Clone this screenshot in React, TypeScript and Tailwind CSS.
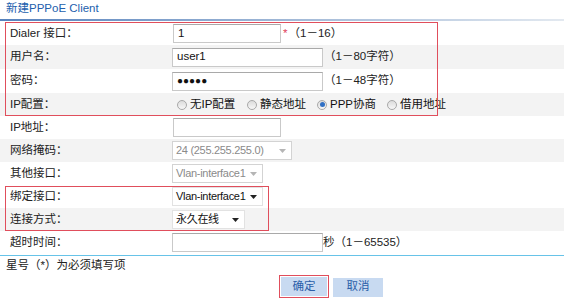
import React from "react";

const font = "font-['Liberation_Sans','Noto_Sans_CJK_SC',sans-serif]";

function Row({ label, gray, h = "h-[23px]", children }: { label: string; gray?: boolean; h?: string; children?: React.ReactNode }) {
  return (
    <div className={`flex items-center ${h} ${gray ? "bg-[#f3f3f3]" : "bg-white"}`}>
      <div className="w-[172px] shrink-0 pl-[10px] text-[#222] whitespace-nowrap">{label}</div>
      <div className="flex items-center whitespace-nowrap">{children}</div>
    </div>
  );
}

function TextBox({ w, value, dots }: { w: string; value?: string; dots?: boolean }) {
  return (
    <div className={`${w} h-[19px] border border-[#c9c9c9] border-t-[#a9a9a9] bg-white pl-[4px] flex items-center text-[#111]`}>
      {dots ? <span className="text-[10px] font-bold">●●●●●</span> : value}
    </div>
  );
}

function Select({ w, value, disabled }: { w: string; value: string; disabled?: boolean }) {
  return (
    <div className={`${w} h-[19px] border ${disabled ? "border-[#d3d3d3]" : "border-[#e2e2e2]"} bg-white pl-[3px] pr-[5px] flex items-center justify-between`}>
      <span className={`whitespace-nowrap text-[11px] tracking-[-0.3px] ${disabled ? "text-[#8a8a8a]" : "text-[#111]"}`}>{value}</span>
      <svg width="7" height="4" viewBox="0 0 7 4" className="shrink-0">
        <path d="M0 0h7L3.5 4z" fill={disabled ? "#b5b5b5" : "#222"} />
      </svg>
    </div>
  );
}

function Radio({ label, checked }: { label: string; checked?: boolean }) {
  return (
    <div className="w-[70px] flex items-center">
      <span className="w-[10px] h-[10px] rounded-full border border-[#a8a8a8] bg-gradient-to-b from-[#dcdcdc] to-[#f7f7f7] flex items-center justify-center">
        {checked && <span className="w-[5px] h-[5px] rounded-full bg-[#2f6fc4]" />}
      </span>
      <span className="ml-[3px] text-[#111]">{label}</span>
    </div>
  );
}

export default function App() {
  return (
    <div className={`w-[564px] h-[301px] bg-white text-[11.5px] leading-none ${font} overflow-hidden`}>
      <div className="h-[19px] pl-[6px] pt-[3px] text-[#2260ad]">新建PPPoE Client</div>
      <div className="h-[2px] bg-gradient-to-r from-[#5682bd] via-[#9fb7d6] to-[#e3e9f0]" />
      <div className="h-[1px]" />

      <div className="relative">
        <Row label="Dialer 接口：">
          <div className="w-[1px]" />
          <TextBox w="w-[108px]" value="1" />
          <span className="ml-[2px] text-[#e0405a]">*</span>
          <span className="ml-[1px] text-[#222]">（1－16）</span>
        </Row>
        <Row label="用户名：" gray h="h-[24px]">
          <TextBox w="w-[151px]" value="user1" />
          <span className="ml-[1px] text-[#222]">（1－80字符）</span>
        </Row>
        <Row label="密码：" h="h-[24px]">
          <TextBox w="w-[151px]" dots />
          <span className="ml-[1px] text-[#222]">（1－48字符）</span>
        </Row>
        <Row label="IP配置：" gray>
          <div className="w-[5px]" />
          <Radio label="无IP配置" />
          <Radio label="静态地址" />
          <Radio label="PPP协商" checked />
          <Radio label="借用地址" />
        </Row>
        <div className="absolute left-[5px] top-[0px] w-[433px] h-[94px] border-[1.5px] border-[#e04e5c] pointer-events-none" />
      </div>

      <Row label="IP地址：">
        <div className="w-[1px]" />
        <TextBox w="w-[108px]" />
      </Row>
      <Row label="网络掩码：" gray>
        <Select w="w-[120px]" value="24 (255.255.255.0)" disabled />
      </Row>
      <Row label="其他接口：">
        <Select w="w-[91px]" value="Vlan-interface1" disabled />
      </Row>

      <div className="relative">
        <Row label="绑定接口：">
          <Select w="w-[91px]" value="Vlan-interface1" />
        </Row>
        <Row label="连接方式：" gray>
          <Select w="w-[73px]" value="永久在线" />
        </Row>
        <div className="absolute left-[5px] top-[1px] w-[264px] h-[45px] border-[1.5px] border-[#e04e5c] pointer-events-none" />
      </div>

      <Row label="超时时间：">
        <TextBox w="w-[151px]" />
        <span className="text-[#222]">秒（1－65535）</span>
      </Row>

      <div className="h-[1px]" />
      <div className="h-[1px] bg-[#67c3e8]" />
      <div className="h-[17px] pl-[6px] pt-[4px] text-[#222]">星号（*）为必须填写项</div>

      <div className="flex gap-[4px] pl-[279px] pt-[2px]">
        <div className="border-[1.5px] border-[#e04e5c] p-[1px]">
          <div className="w-[46px] h-[19px] bg-[#c8daf1] flex items-center justify-center text-[#2a5ea8]">确定</div>
        </div>
        <div className="pt-[2.5px]">
          <div className="w-[50px] h-[19px] bg-[#c8daf1] flex items-center justify-center text-[#2a5ea8]">取消</div>
        </div>
      </div>
    </div>
  );
}
